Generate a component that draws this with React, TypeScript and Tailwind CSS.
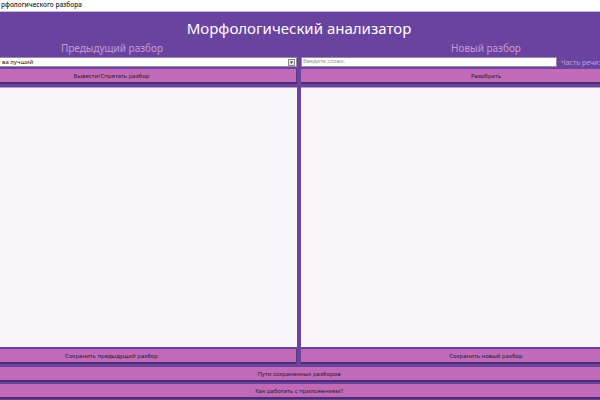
import React from "react";

const font = { fontFamily: '"Noto Sans", "Open Sans", sans-serif' };

function Btn({ label, className = "" }: { label: string; className?: string }) {
  return (
    <div
      className={
        "flex h-[15px] shrink-0 items-center justify-center bg-[#c06ab8] border-b-2 border-[#4d2d72] text-[6px] leading-none text-[#2a1a30] " +
        className
      }
    >
      {label}
    </div>
  );
}

export default function App() {
  return (
    <div className="flex h-[400px] w-[600px] flex-col overflow-hidden bg-[#6a43a0]" style={font}>
      <div className="flex h-[12px] shrink-0 items-center bg-white border-b border-[#c8b8d8] text-[6.5px] font-medium leading-none text-[#222] pl-[1px]">
        рфологического разбора
      </div>
      <div className="ml-[-73px] flex w-[744px] shrink-0 flex-col">
        <div className="flex h-[27px] shrink-0 items-center justify-center pt-[5px] text-[15px] leading-none text-white">
          Морфологический анализатор
        </div>
        <div className="flex h-[18px] shrink-0 items-center gap-[4px]">
          <div className="flex w-[370px] justify-center text-[10px] leading-none text-[#c79bd6]">
            Предыдущий разбор
          </div>
          <div className="flex w-[370px] justify-center text-[10px] leading-none text-[#c79bd6]">
            Новый разбор
          </div>
        </div>
        <div className="flex h-[307px] shrink-0 gap-[4px]">
          <div className="flex w-[370px] flex-col">
            <div className="flex h-[10px] shrink-0 items-center justify-between bg-white border border-[#9a8aa8] pl-[74px] pr-[1px] text-[6px] leading-none text-[#222]">
              <span>ва лучший</span>
              <span className="flex h-[7px] w-[7px] items-center justify-center border border-[#888] bg-[#e8e8e8] text-[4.5px] leading-none">
                ▼
              </span>
            </div>
            <Btn label="Вывести/Спрятать разбор" className="mt-[2px] border-r border-r-[#5a3a7e]" />
            <div className="mt-[3px] h-[260px] shrink-0 bg-[#f8f6f8] border-t border-[#b59ac8]" />
            <Btn label="Сохранить предыдущий разбор" className="mt-[2px] border-r border-r-[#5a3a7e]" />
          </div>
          <div className="flex w-[370px] flex-col">
            <div className="flex h-[10px] shrink-0 items-center">
              <div className="flex h-[10px] w-[256px] shrink-0 items-center bg-white border border-[#9a8aa8] pl-[1px] text-[5.7px] leading-none text-[#9a9a9a]">
                Введите слово:
              </div>
              <span className="ml-[4px] whitespace-nowrap text-[7px] leading-none text-[#c79bd6]">
                Часть речи:
              </span>
            </div>
            <Btn label="Разобрать" className="mt-[2px]" />
            <div className="mt-[3px] h-[260px] shrink-0 bg-[#f8f6f8] border-t border-[#b59ac8]" />
            <Btn label="Сохранить новый разбор" className="mt-[2px]" />
          </div>
        </div>
        <Btn label="Пути сохраненных разборов" className="mt-[3px]" />
        <Btn label="Как работать с приложением?" className="mt-[2px]" />
      </div>
    </div>
  );
}
